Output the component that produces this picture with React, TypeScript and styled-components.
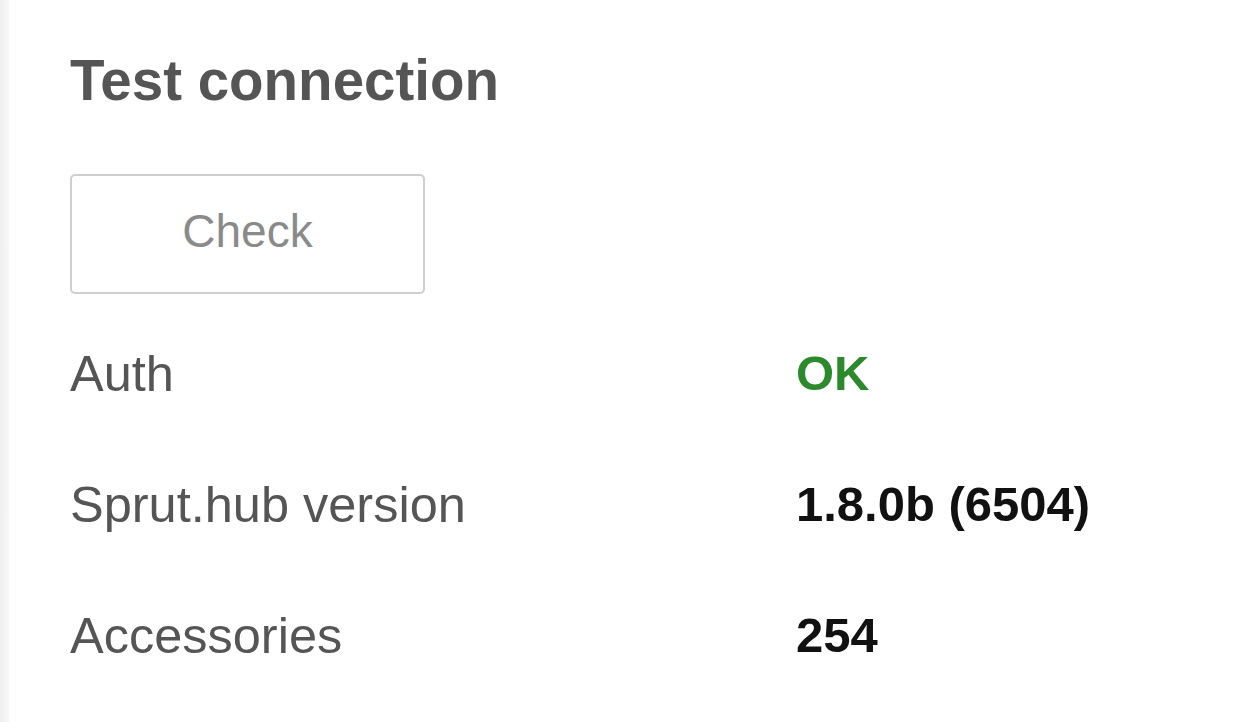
import { Fragment } from 'react';
import styled, { createGlobalStyle } from 'styled-components';

const GlobalStyle = createGlobalStyle`
  html, body {
    margin: 0;
    padding: 0;
    background: #ffffff;
    font-family: "Liberation Sans", Arial, Helvetica, sans-serif;
  }
`;

const Page = styled.div`
  display: flex;
  min-height: 722px;
`;

const Edge = styled.div`
  width: 9px;
  flex-shrink: 0;
  background: linear-gradient(to right, #efefef, #f7f7f7);
`;

const Panel = styled.section`
  flex: 1;
  padding: 47px 0 0 61px;
`;

const Title = styled.h2`
  margin: 0;
  font-size: 56.5px;
  line-height: 67px;
  font-weight: 700;
  color: #555555;
`;

const CheckButton = styled.button`
  margin-top: 60px;
  width: 355px;
  height: 120px;
  border: 2px solid #cfcfcf;
  border-radius: 5px;
  background: #ffffff;
  color: #8a8a8a;
  font-family: inherit;
  font-size: 46px;
  padding: 0 0 6px;
`;

const InfoGrid = styled.dl`
  display: grid;
  grid-template-columns: 726px auto;
  grid-auto-rows: 131px;
  margin: 14px 0 0;
  font-size: 49px;
  line-height: 131px;
`;

const Label = styled.dt`
  margin: 0;
  font-size: 50.5px;
  color: #555555;
`;

const Value = styled.dd<{ $tone?: 'ok' | 'plain' }>`
  margin: 0;
  font-weight: 700;
  color: ${({ $tone }) => ($tone === 'ok' ? '#2c8a2c' : '#111111')};
`;

const rows: { label: string; value: string; tone?: 'ok' | 'plain' }[] = [
  { label: 'Auth', value: 'OK', tone: 'ok' },
  { label: 'Sprut.hub version', value: '1.8.0b (6504)' },
  { label: 'Accessories', value: '254' },
];

export default function App() {
  return (
    <>
      <GlobalStyle />
      <Page>
        <Edge />
        <Panel>
          <Title>Test connection</Title>
          <CheckButton type="button">Check</CheckButton>
          <InfoGrid>
            {rows.map((row) => (
              <Fragment key={row.label}>
                <Label>{row.label}</Label>
                <Value $tone={row.tone}>{row.value}</Value>
              </Fragment>
            ))}
          </InfoGrid>
        </Panel>
      </Page>
    </>
  );
}
